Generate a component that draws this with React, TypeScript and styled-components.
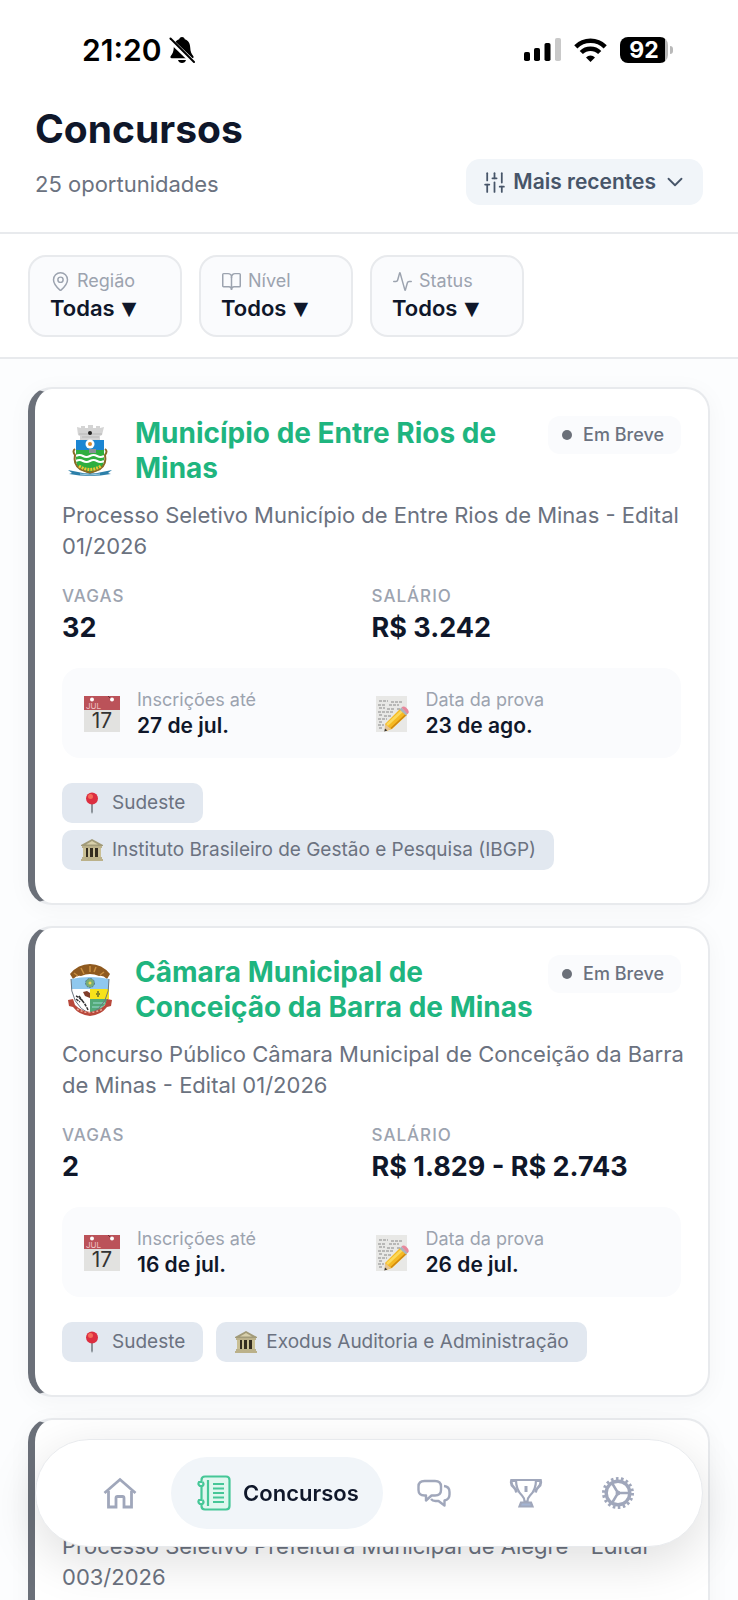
import React, { useState } from "react";
import styled, { createGlobalStyle } from "styled-components";
import { Activity, BookOpen, ChevronDown, MapPin, SlidersVertical } from "lucide-react";

const Ink = "#0f172a";
const Slate = "#475569";
const Gray = "#6b7280";
const LightGray = "#9ca3af";
const Line = "#e8eaed";
const Soft = "#fafbfd";
const Green = "#1fb57f";

const GlobalStyle = createGlobalStyle`
  * { box-sizing: border-box; }
  body {
    margin: 0;
    background: #fcfdfe;
    color: ${Ink};
    font-family: Inter, "Liberation Sans", sans-serif;
  }
  h1, h2, p, dl, dd, dt, ul { margin: 0; padding: 0; }
  button, select { font-family: inherit; }
`;

const Screen = styled.div`
  height: 100vh;
  display: flex;
  flex-direction: column;
  overflow: hidden;
`;

const StatusBar = styled.div`
  display: flex;
  justify-content: space-between;
  align-items: center;
  height: 105px;
  flex-shrink: 0;
  padding: 0 65px 6px 82px;
  background: #fff;
  color: #000;
`;

const Clock = styled.div`
  display: flex;
  align-items: center;
  gap: 8px;
  font-size: 30px;
  line-height: 36px;
  font-weight: 600;
`;

const Signals = styled.div`
  display: flex;
  align-items: center;
  gap: 13px;
`;

const Battery = styled.div`
  display: flex;
  align-items: center;
  gap: 2px;
`;

const BatteryBody = styled.div`
  width: 48px;
  height: 26px;
  border-radius: 8px;
  background: linear-gradient(to right, #000 45px, #b9b9b9 45px);
  color: #fff;
  font-size: 23px;
  line-height: 26px;
  font-weight: 700;
  text-align: center;
`;

const BatteryTip = styled.div`
  width: 3px;
  height: 8px;
  border-radius: 0 4px 4px 0;
  background: #b9b9b9;
`;

const Header = styled.header`
  flex-shrink: 0;
  padding: 0 35px 27px;
  border-bottom: 2px solid ${Line};
  background: #fff;
`;

const Title = styled.h1`
  font-size: 39px;
  line-height: 48px;
  font-weight: 700;
`;

const HeaderRow = styled.div`
  display: flex;
  justify-content: space-between;
  align-items: center;
  margin-top: 6px;
`;

const Count = styled.p`
  padding-top: 4px;
  font-size: 22px;
  line-height: 28px;
  color: ${Gray};
`;

const Sort = styled.label`
  display: flex;
  align-items: center;
  height: 46px;
  padding: 0 15px 0 16px;
  border-radius: 14px;
  background: #f1f5f9;
  color: ${Slate};
`;

const Select = styled.select`
  appearance: none;
  field-sizing: content;
  border: 0;
  padding: 0;
  background: none;
  color: ${Ink};
  font-size: 22px;
  line-height: 28px;
  font-weight: 600;
`;

const SortSelect = styled(Select)`
  margin: 0 6px;
  color: ${Slate};
  font-size: 21px;
`;

const Filters = styled.div`
  display: flex;
  flex-shrink: 0;
  gap: 17px;
  padding: 21px 28px 20px;
  border-bottom: 2px solid ${Line};
  background: #fff;
`;

const FilterBox = styled.label`
  display: flex;
  flex-direction: column;
  gap: 1px;
  width: 154px;
  padding: 12px 20px 13px;
  border: 2px solid ${Line};
  border-radius: 18px;
  background: ${Soft};
`;

const FilterName = styled.span`
  display: flex;
  align-items: center;
  gap: 6px;
  font-size: 18px;
  line-height: 24px;
  color: ${LightGray};
`;

const FilterValue = styled.span`
  display: flex;
  align-items: center;
  gap: 7px;
  height: 28px;
`;

const Caret = styled.span`
  font-family: "DejaVu Sans", sans-serif;
  font-size: 19px;
  line-height: 28px;
`;

const List = styled.main`
  flex: 1;
  min-height: 0;
  display: flex;
  flex-direction: column;
  gap: 21px;
  padding: 28px 28px 160px;
  overflow-y: auto;
  scrollbar-width: none;
`;

const Card = styled.article`
  flex-shrink: 0;
  padding: 27px 27px 33px;
  border: 2px solid ${Line};
  border-left: 7px solid #6b7079;
  border-radius: 24px;
  background: #fff;
  box-shadow: 0 4px 24px rgba(15, 23, 42, 0.04);
`;

const CardHead = styled.div`
  display: flex;
  align-items: center;
`;

const Crest = styled.div`
  display: flex;
  flex-shrink: 0;
  width: 55px;
  margin-right: 18px;
  justify-content: center;
`;

const CardTitle = styled.h2`
  flex: 1;
  font-size: 28px;
  line-height: 35px;
  font-weight: 700;
  color: ${Green};
`;

const Badge = styled.span`
  display: flex;
  align-items: center;
  align-self: flex-start;
  gap: 11px;
  height: 38px;
  padding: 0 17px 0 14px;
  border-radius: 12px;
  background: ${Soft};
  font-size: 18px;
  line-height: 22px;
  font-weight: 500;
  color: ${Gray};
`;

const Dot = styled.span`
  width: 10px;
  height: 10px;
  border-radius: 50%;
  background: #6b7079;
`;

const Description = styled.p`
  margin: 14px -12px 0 0;
  font-size: 22px;
  line-height: 31px;
  color: ${Gray};
`;

const Stats = styled.dl`
  display: grid;
  grid-template-columns: 1fr 1fr;
  margin-top: 24px;
`;

const StatName = styled.dt`
  font-size: 17px;
  line-height: 20px;
  font-weight: 500;
  letter-spacing: 1px;
  text-transform: uppercase;
  color: ${LightGray};
`;

const StatValue = styled.dd`
  margin-top: 6px;
  font-size: 27px;
  line-height: 32px;
  font-weight: 700;
`;

const Dates = styled.dl`
  display: grid;
  grid-template-columns: 1fr 1fr;
  margin-top: 24px;
  padding: 20px 20px 18px 22px;
  border-radius: 18px;
  background: ${Soft};
`;

const DateItem = styled.div`
  display: flex;
  align-items: center;
  gap: 17px;
`;

const DateName = styled.dt`
  font-size: 18px;
  line-height: 24px;
  color: ${LightGray};
`;

const DateValue = styled.dd`
  font-size: 21px;
  line-height: 28px;
  font-weight: 600;
`;

const Tags = styled.ul`
  display: flex;
  flex-wrap: wrap;
  gap: 7px 13px;
  margin-top: 25px;
  list-style: none;
`;

const Tag = styled.li`
  display: flex;
  align-items: center;
  gap: 9px;
  height: 40px;
  padding: 0 18px 0 19px;
  border-radius: 10px;
  background: #e2e8f0;
  font-size: 19px;
  line-height: 24px;
  color: ${Gray};
`;

const TabBar = styled.nav`
  position: fixed;
  left: 35px;
  right: 35px;
  bottom: 53px;
  display: flex;
  align-items: center;
  justify-content: space-between;
  height: 108px;
  padding: 0 43px;
  border: 1px solid ${Line};
  border-radius: 54px;
  background: #fff;
  box-shadow: 0 14px 50px rgba(0, 0, 0, 0.13);
`;

const Tab = styled.button<{ $active?: boolean }>`
  display: flex;
  align-items: center;
  gap: 12px;
  height: 72px;
  padding: ${(p) => (p.$active ? "0 24px 0 26px" : "0 24px")};
  border: 0;
  border-radius: 36px;
  background: ${(p) => (p.$active ? "#f1f5f9" : "none")};
  color: ${(p) => (p.$active ? Ink : "#a0a7bb")};
  font-size: 22px;
  line-height: 28px;
  font-weight: 600;
`;

const BellOff = () => (
  <svg width="26" height="28" viewBox="0 0 26 28" aria-hidden="true">
    <path d="M13 1c1.700 0 2.600 1 2.800 2.300 3.600 1.100 5.200 4.100 5.400 8 .2 4.600 1.200 6.600 3 8.700.8 1 .4 2.300-1 2.300H2.800c-1.400 0-1.800-1.300-1-2.300 1.800-2.100 2.800-4.100 3-8.700.2-3.900 1.800-6.900 5.400-8C10.400 2 11.300 1 13 1z" />
    <path d="M9 24h8c-.5 2-2 3-4 3s-3.500-1-4-3z" />
    <path d="M0 3l25 24" stroke="#fff" strokeWidth="5" />
    <path d="M1.500 2.500L25 26" stroke="#000" strokeWidth="2" strokeLinecap="round" />
  </svg>
);

const Cellular = () => (
  <svg width="37" height="24" viewBox="0 0 37 24" aria-hidden="true">
    <rect x="0" y="14" width="6" height="9" rx="1.800" />
    <rect x="10" y="10" width="6" height="13" rx="1.800" />
    <rect x="20.500" y="5" width="6" height="18" rx="1.800" />
    <rect x="31" y="0" width="6" height="23" rx="1.800" fill="#c9c9c9" />
  </svg>
);

const Wifi = () => (
  <svg width="33" height="24" viewBox="0 0 33 24" fill="none" stroke="#000" strokeWidth="4.500" aria-hidden="true">
    <path d="M1.800 8.800a21 21 0 0 1 29.400 0" />
    <path d="M7.300 14.500a13 13 0 0 1 18.400 0" />
    <path d="M16.500 24l-4.500-4.600a6.400 6.400 0 0 1 9 0z" fill="#000" stroke="none" />
  </svg>
);

const CastleCrest = () => (
  <svg width="46" height="52" viewBox="0 0 46 52" aria-hidden="true">
    <path d="M10 2l4 1V1h4v2h3V0h5v3h3V1h4v2l4-1-2 8-2 1v4H13v-4l-2-1z" fill="#d4d4d4" />
    <path d="M12 9h23M15 12h17" stroke="#b8b8b8" />
    <circle cx="23" cy="8" r="2" fill="#222" />
    <path d="M9 15h28v14H9z" fill="#1d86d2" />
    <path d="M9 25h28v11q-1 10-14 12Q10 46 9 36z" fill="#2fae3f" />
    <path d="M9 31q3.500-2 7 0t7 0 7 0 7 0M9 36q3.500-2 7 0t7 0 7 0 7 0" fill="none" stroke="#fff" strokeWidth="2.200" />
    <path d="M8 24q-3 2 0 6-2 9 5 14l10 4 10-4q7-5 5-14 3-4 0-6" fill="none" stroke="#8a6a24" strokeWidth="2" />
    <path d="M12 41q11 7 22 0" fill="none" stroke="#f0c534" strokeWidth="3" strokeDasharray="2 1" />
    <circle cx="23" cy="19" r="4.500" fill="#fff" />
    <circle cx="23" cy="19" r="2" fill="#dc8b33" />
    <path d="M22 24h7v4h-7z" fill="#8b9197" />
    <path d="M1 45l10 2q12 3 24 0l10-2-4 3 3 1q-21 4-42 0l3-1z" fill="#2c7fa9" />
    <path d="M13 49q10 2 20 0" stroke="#9ccadf" fill="none" />
  </svg>
);

const ShieldCrest = () => (
  <svg width="44" height="54" viewBox="0 0 44 54" aria-hidden="true">
    <path d="M2 11Q10 1 22 1t20 10l-3 5q-4-4-8-3-9-4-18 0-4-1-8 3z" fill="#8f5a1f" />
    <path d="M6 10l4 3m3-8l3 6m6-8v6m6-5l-2 5m10 0l-4 3" stroke="#c98f40" strokeWidth="1.500" />
    <path d="M3 16q19-4 38 0v11H3z" fill="#8fc8ee" />
    <path d="M22 26h19v10H22z" fill="#f7e21b" />
    <path d="M22 36h18q-4 11-18 15z" fill="#52a978" />
    <path d="M3 26h19v25Q4 46 3 26z" fill="#fff" />
    <path d="M8 33q7 3 12 14M8 36l4 3m-1-6l5 7" stroke="#333" strokeWidth="1.500" fill="none" strokeDasharray="3 1" />
    <path d="M25 40l12 0M24 44h11" stroke="#9adcd2" />
    <path d="M3 16q-1 26 19 35 20-9 19-35" fill="none" stroke="#6d7680" />
    <circle cx="22" cy="20" r="4.500" fill="#79ad72" stroke="#51789b" strokeDasharray="2 1" />
    <circle cx="22" cy="20" r="1.500" fill="#f3d75a" />
    <path d="M15 29l4-1 3 2v5l-5-2z" fill="#813e2b" />
    <path d="M30 28v6m-2-3h4" stroke="#8a8a20" strokeWidth="2" />
    <path d="M0 37l5-1 2 6q6 6 15 7 9-1 15-7l2-6 5 1-1 6-4 1q-6 8-17 9-11-1-17-9l-4-1z" fill="#b8483b" />
    <path d="M9 46q12 7 26 0" stroke="#e7a494" strokeWidth="1.500" strokeDasharray="2 2" fill="none" />
  </svg>
);

const CalendarIcon = () => (
  <svg width="36" height="36" viewBox="0 0 36 36" aria-hidden="true">
    <path d="M0 0h36v36H0z" fill="#e2e2e0" />
    <path d="M0 0h36v14H0z" fill="#bb5259" />
    <circle cx="8" cy="3.500" r="2" fill="#fff" />
    <path d="M24 0l5 5" stroke="#732e35" />
    <circle cx="28" cy="3.500" r="2" fill="#fff" />
    <text x="2" y="12.500" fontSize="8" fill="#efc2c4">JUL</text>
    <text x="18" y="32" fontSize="21" textAnchor="middle" fill="#333">17</text>
  </svg>
);

const MemoIcon = () => (
  <svg width="36" height="36" viewBox="0 0 36 36" aria-hidden="true">
    <path d="M3 0h31v36H3z" fill="#e8e8e6" />
    <path d="M6 5h9m3 1h11M5 9h8m3 0h10M6 12h6m2 1h8m2 0h3M5 16h15M6 19h3m2 1h7M5 23h9M6 26h4M5 29h6M6 32h4" stroke="#888" strokeDasharray="3 1" />
    <path d="M12 28L27 13l7 6-15 14-6 2-1-1z" fill="#f5b922" />
    <path d="M14 29l15-14" stroke="#fbd95b" strokeWidth="2.500" />
    <path d="M18 32.500l15-14" stroke="#cf8711" strokeWidth="1.500" />
    <path d="M26.500 13.500l2-2 6.500 6-2 2z" fill="#aab5bd" />
    <path d="M28.500 11.500q2-2 5 .5t2 5l-1 1z" fill="#e7879b" />
    <path d="M12 28l6 5-6.500 2.500z" fill="#e5c493" />
    <path d="M11.300 35.500l.7-3 2.300 2z" fill="#333" />
  </svg>
);

const PinIcon = () => (
  <svg width="22" height="22" viewBox="0 0 22 22" aria-hidden="true">
    <path d="M10 11h2v9l-1 2-1-2z" fill="#8b9299" />
    <circle cx="11" cy="6.500" r="6" fill="#dc2e40" />
    <circle cx="9.500" cy="4.500" r="2.500" fill="#f56a58" />
  </svg>
);

const BankIcon = () => (
  <svg width="22" height="22" viewBox="0 0 22 22" aria-hidden="true">
    <path d="M3 6h16v13H3z" fill="#332c20" />
    <path d="M0 6l11-6 11 6v1H0z" fill="#a29b79" />
    <path d="M5 5.500l6-3.500 6 3.500z" fill="#d8d0ab" />
    <path d="M2 7h3v12H2zM7 7h2v12H7zM12 7h2v12h-2zM17 7h3v12h-3z" fill="#c9bf94" />
    <path d="M1 7h20v2H1zM1 18h20v2H1zM0 20h22v2H0z" fill="#bbb18a" />
  </svg>
);

const HomeIcon = () => (
  <svg width="34" height="32" viewBox="0 0 34 32" fill="none" stroke="currentColor" strokeWidth="2.800" aria-hidden="true">
    <path d="M1.500 16L17 2.500 32.500 16" />
    <path d="M5.500 14v16h7.500V21q0-1.500 1.500-1.500h5q1.500 0 1.500 1.500v9h7.500V14" />
  </svg>
);

const NotebookIcon = () => (
  <svg width="34" height="36" viewBox="0 0 34 36" fill="none" stroke="#45c797" strokeWidth="2.200" aria-hidden="true">
    <path d="M4.500 7V5q0-3.500 3.500-3.500h21q3.500 0 3.500 3.500v26q0 3.500-3.500 3.500H8q-3.500 0-3.500-3.500v-1M4.500 12v13" fill="#e0f7ef" />
    <path d="M11 5v26M16 9h11M16 13.500h11M16 18h11M16 22.500h11M16 27h11" />
    <path d="M5 7H2q-1.500 2.500 1 4h2.500q2-2 0-4M5 25H2q-1.500 2.500 1 4h2.500q2-2 0-4" />
  </svg>
);

const ChatIcon = () => (
  <svg width="34" height="30" viewBox="0 0 34 30" fill="none" stroke="currentColor" strokeWidth="2.400" strokeLinejoin="round" aria-hidden="true">
    <path d="M7.500 3h10.500q6 0 6 5.500v3.500q0 5.500-6 5.500h-3.500L9 22.500v-5H7.500q-6 0-6-5.500V8.500Q1.500 3 7.500 3z" />
    <path d="M27 8q5.500.5 5.500 6v2.500q0 5-5 6v5L21.500 23h-3q-3 0-4.500-2" />
  </svg>
);

const TrophyIcon = () => (
  <svg width="34" height="32" viewBox="0 0 34 32" fill="none" stroke="currentColor" strokeWidth="2.200" aria-hidden="true">
    <path d="M7 3h20q0 10-6 15.500-2.500 2.500-2.500 6h-3q0-3.500-2.500-6Q7 13 7 3z" />
    <path d="M7.500 3.500H2.500q-1 4 2 6.500 2.500 2 3 5.500M26.500 3.500h5q1 4-2 6.500-2.500 2-3 5.500" strokeWidth="2.800" />
    <path d="M10.500 29.500l1.500-4h10l1.500 4z" fill="#a4b4d2" />
    <path d="M17 9v6" strokeWidth="3" />
  </svg>
);

const GearIcon = () => (
  <svg width="34" height="34" viewBox="0 0 34 34" fill="none" stroke="currentColor" aria-hidden="true">
    <circle cx="17" cy="17" r="14.500" strokeWidth="3" strokeDasharray="2.600 2.461" />
    <circle cx="17" cy="17" r="11.800" strokeWidth="3.400" />
    <path d="M17 17h11M17 17l-6-10M17 17l-6 10" strokeWidth="2.500" />
    <circle cx="17" cy="17" r="2" fill="currentColor" strokeWidth="1" />
  </svg>
);

interface IContest {
  crest: React.ReactNode;
  title: string;
  description: string;
  vacancies: string;
  salary: string;
  deadline: string;
  exam: string;
  region: string;
  board: string;
}

const contests: IContest[] = [
  {
    crest: <CastleCrest />,
    title: "Município de Entre Rios de Minas",
    description: "Processo Seletivo Município de Entre Rios de Minas - Edital 01/2026",
    vacancies: "32",
    salary: "R$ 3.242",
    deadline: "27 de jul.",
    exam: "23 de ago.",
    region: "Sudeste",
    board: "Instituto Brasileiro de Gestão e Pesquisa (IBGP)",
  },
  {
    crest: <ShieldCrest />,
    title: "Câmara Municipal de Conceição da Barra de Minas",
    description: "Concurso Público Câmara Municipal de Conceição da Barra de Minas - Edital 01/2026",
    vacancies: "2",
    salary: "R$ 1.829 - R$ 2.743",
    deadline: "16 de jul.",
    exam: "26 de jul.",
    region: "Sudeste",
    board: "Exodus Auditoria e Administração",
  },
];

const ContestCard: React.FC<IContest> = (props) => (
  <Card>
    <CardHead>
      <Crest>{props.crest}</Crest>
      <CardTitle>{props.title}</CardTitle>
      <Badge><Dot />Em Breve</Badge>
    </CardHead>
    <Description>{props.description}</Description>
    <Stats>
      <div>
        <StatName>Vagas</StatName>
        <StatValue>{props.vacancies}</StatValue>
      </div>
      <div>
        <StatName>Salário</StatName>
        <StatValue>{props.salary}</StatValue>
      </div>
    </Stats>
    <Dates>
      <DateItem>
        <CalendarIcon />
        <div>
          <DateName>Inscrições até</DateName>
          <DateValue>{props.deadline}</DateValue>
        </div>
      </DateItem>
      <DateItem>
        <MemoIcon />
        <div>
          <DateName>Data da prova</DateName>
          <DateValue>{props.exam}</DateValue>
        </div>
      </DateItem>
    </Dates>
    <Tags>
      <Tag><PinIcon />{props.region}</Tag>
      <Tag><BankIcon />{props.board}</Tag>
    </Tags>
  </Card>
);

// the last card only peeks out from under the tab bar
const PeekHead = styled.div`
  height: 70px;
`;

const filters = [
  { name: "Região", icon: <MapPin size={21} strokeWidth={1.7} />, options: ["Todas", "Sudeste", "Sul"] },
  { name: "Nível", icon: <BookOpen size={21} strokeWidth={1.7} />, options: ["Todos", "Médio", "Superior"] },
  { name: "Status", icon: <Activity size={21} strokeWidth={1.7} />, options: ["Todos", "Em Breve"] },
];

const tabs = [
  { name: "Início", icon: <HomeIcon /> },
  { name: "Concursos", icon: <NotebookIcon /> },
  { name: "Conversas", icon: <ChatIcon /> },
  { name: "Conquistas", icon: <TrophyIcon /> },
  { name: "Ajustes", icon: <GearIcon /> },
];

const App: React.FC = () => {
  const [tab, setTab] = useState("Concursos");
  return (
    <Screen>
      <GlobalStyle />
      <StatusBar>
        <Clock>21:20<BellOff /></Clock>
        <Signals>
          <Cellular />
          <Wifi />
          <Battery><BatteryBody>92</BatteryBody><BatteryTip /></Battery>
        </Signals>
      </StatusBar>
      <Header>
        <Title>Concursos</Title>
        <HeaderRow>
          <Count>25 oportunidades</Count>
          <Sort>
            <SlidersVertical size={25} strokeWidth={1.7} />
            <SortSelect aria-label="Ordenar">
              <option>Mais recentes</option>
              <option>Mais vagas</option>
            </SortSelect>
            <ChevronDown size={26} strokeWidth={1.7} />
          </Sort>
        </HeaderRow>
      </Header>
      <Filters>
        {filters.map((f) => (
          <FilterBox key={f.name}>
            <FilterName>{f.icon}{f.name}</FilterName>
            <FilterValue>
              <Select>
                {f.options.map((o) => <option key={o}>{o}</option>)}
              </Select>
              <Caret aria-hidden="true">▼</Caret>
            </FilterValue>
          </FilterBox>
        ))}
      </Filters>
      <List>
        {contests.map((c) => <ContestCard key={c.title} {...c} />)}
        <Card>
          <PeekHead />
          <Description>Processo Seletivo Prefeitura Municipal de Alegre - Edital 003/2026</Description>
        </Card>
      </List>
      <TabBar>
        {tabs.map((t) => (
          <Tab key={t.name} $active={t.name === tab} aria-label={t.name} onClick={() => setTab(t.name)}>
            {t.icon}
            {t.name === tab && t.name}
          </Tab>
        ))}
      </TabBar>
    </Screen>
  );
};
export default App;
